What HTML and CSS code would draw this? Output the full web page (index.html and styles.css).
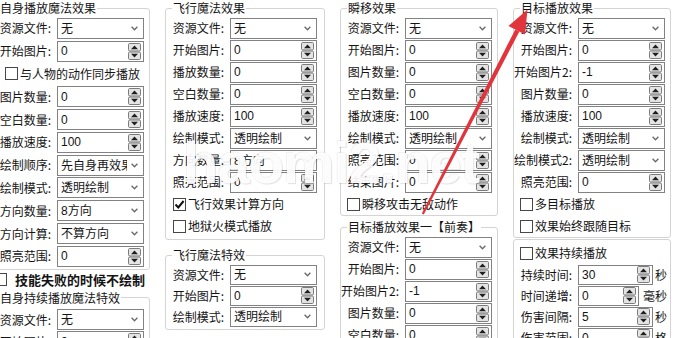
FILE: index.html
```html
<!DOCTYPE html>
<html lang="zh-CN">
<head>
<meta charset="utf-8">
<title>魔法效果设置</title>
<link rel="stylesheet" href="styles.css">
</head>
<body>
<svg class="defs" aria-hidden="true">
  <defs>
    <symbol id="spin" viewBox="0 0 13 17">
      <rect x="0.5" y="0.5" width="12" height="7.5" rx="1.2" fill="#e4e4e4" stroke="#7c7c7c"/>
      <rect x="0.5" y="9" width="12" height="7.5" rx="1.2" fill="#e4e4e4" stroke="#7c7c7c"/>
      <path d="M3 6.2 6.5 2.6 10 6.2Z" fill="#1e1e1e"/>
      <path d="M3 10.8 10 10.8 6.5 14.4Z" fill="#1e1e1e"/>
    </symbol>
    <symbol id="chev" viewBox="0 0 7 5">
      <path d="M0.6 0.8 3.5 3.8 6.4 0.8" fill="none" stroke="#6a6a6a" stroke-width="1.3"/>
    </symbol>
    <symbol id="tick" viewBox="0 0 11 11">
      <path d="M1.5 5.5 4.3 8.4 9.6 2" fill="none" stroke="#111" stroke-width="2"/>
    </symbol>
  </defs>
</svg>

<div class="dialog">
  <!-- column 1 -->
  <div class="col">
    <fieldset class="grp tall pb1">
      <legend>自身播放魔法效果</legend>
      <div class="row"><span class="lbl"><span>资源文件:</span></span><div class="ctl sel"><span class="v">无</span><svg class="chev"><use href="#chev"/></svg></div></div>
      <div class="row"><span class="lbl"><span>开始图片:</span></span><div class="ctl spin"><span class="v">0</span><svg class="sb"><use href="#spin"/></svg></div></div>
      <div class="chk ind6"><span class="box"></span><span>与人物的动作同步播放</span></div>
      <div class="row"><span class="lbl"><span>图片数量:</span></span><div class="ctl spin"><span class="v">0</span><svg class="sb"><use href="#spin"/></svg></div></div>
      <div class="row"><span class="lbl"><span>空白数量:</span></span><div class="ctl spin"><span class="v">0</span><svg class="sb"><use href="#spin"/></svg></div></div>
      <div class="row"><span class="lbl"><span>播放速度:</span></span><div class="ctl spin"><span class="v">100</span><svg class="sb"><use href="#spin"/></svg></div></div>
      <div class="row"><span class="lbl"><span>绘制顺序:</span></span><div class="ctl sel"><span class="v">先自身再效果</span><svg class="chev"><use href="#chev"/></svg></div></div>
      <div class="row"><span class="lbl"><span>绘制模式:</span></span><div class="ctl sel"><span class="v">透明绘制</span><svg class="chev"><use href="#chev"/></svg></div></div>
      <div class="row"><span class="lbl"><span>方向数量:</span></span><div class="ctl sel"><span class="v">8方向</span><svg class="chev"><use href="#chev"/></svg></div></div>
      <div class="row"><span class="lbl"><span>方向计算:</span></span><div class="ctl sel"><span class="v">不算方向</span><svg class="chev"><use href="#chev"/></svg></div></div>
      <div class="row"><span class="lbl"><span>照亮范围:</span></span><div class="ctl spin"><span class="v">0</span><svg class="sb"><use href="#spin"/></svg></div></div>
    </fieldset>
    <div class="chk strong"><span class="box"></span><span>技能失败的时候不绘制</span></div>
    <fieldset class="grp pt3">
      <legend>自身持续播放魔法特效</legend>
      <div class="row"><span class="lbl"><span>资源文件:</span></span><div class="ctl sel"><span class="v">无</span><svg class="chev"><use href="#chev"/></svg></div></div>
      <div class="row"><span class="lbl"><span>开始图片:</span></span><div class="ctl spin"><span class="v">0</span><svg class="sb"><use href="#spin"/></svg></div></div>
    </fieldset>
  </div>

  <!-- column 2 -->
  <div class="col">
    <fieldset class="grp">
      <legend>飞行魔法效果</legend>
      <div class="row"><span class="lbl"><span>资源文件:</span></span><div class="ctl sel"><span class="v">无</span><svg class="chev"><use href="#chev"/></svg></div></div>
      <div class="row"><span class="lbl"><span>开始图片:</span></span><div class="ctl spin"><span class="v">0</span><svg class="sb"><use href="#spin"/></svg></div></div>
      <div class="row"><span class="lbl"><span>播放数量:</span></span><div class="ctl spin"><span class="v">0</span><svg class="sb"><use href="#spin"/></svg></div></div>
      <div class="row"><span class="lbl"><span>空白数量:</span></span><div class="ctl spin"><span class="v">0</span><svg class="sb"><use href="#spin"/></svg></div></div>
      <div class="row"><span class="lbl"><span>播放速度:</span></span><div class="ctl spin"><span class="v">100</span><svg class="sb"><use href="#spin"/></svg></div></div>
      <div class="row"><span class="lbl"><span>绘制模式:</span></span><div class="ctl sel"><span class="v">透明绘制</span><svg class="chev"><use href="#chev"/></svg></div></div>
      <div class="row"><span class="lbl"><span>方向数量:</span></span><div class="ctl sel"><span class="v">8方向</span><svg class="chev"><use href="#chev"/></svg></div></div>
      <div class="row"><span class="lbl"><span>照亮范围:</span></span><div class="ctl spin"><span class="v">0</span><svg class="sb"><use href="#spin"/></svg></div></div>
      <div class="chk ind1"><span class="box"><svg class="tick"><use href="#tick"/></svg></span><span>飞行效果计算方向</span></div>
      <div class="chk ind1"><span class="box"></span><span>地狱火模式播放</span></div>
    </fieldset>
    <fieldset class="grp mt7 r21">
      <legend>飞行魔法特效</legend>
      <div class="row"><span class="lbl"><span>资源文件:</span></span><div class="ctl sel"><span class="v">无</span><svg class="chev"><use href="#chev"/></svg></div></div>
      <div class="row"><span class="lbl"><span>开始图片:</span></span><div class="ctl spin"><span class="v">0</span><svg class="sb"><use href="#spin"/></svg></div></div>
      <div class="row"><span class="lbl"><span>绘制模式:</span></span><div class="ctl sel"><span class="v">透明绘制</span><svg class="chev"><use href="#chev"/></svg></div></div>
    </fieldset>
  </div>

  <!-- column 3 -->
  <div class="col">
    <fieldset class="grp pb0">
      <legend>瞬移效果</legend>
      <div class="row"><span class="lbl"><span>资源文件:</span></span><div class="ctl sel"><span class="v">无</span><svg class="chev"><use href="#chev"/></svg></div></div>
      <div class="row"><span class="lbl"><span>开始图片:</span></span><div class="ctl spin"><span class="v">0</span><svg class="sb"><use href="#spin"/></svg></div></div>
      <div class="row"><span class="lbl"><span>图片数量:</span></span><div class="ctl spin"><span class="v">0</span><svg class="sb"><use href="#spin"/></svg></div></div>
      <div class="row"><span class="lbl"><span>空白数量:</span></span><div class="ctl spin"><span class="v">0</span><svg class="sb"><use href="#spin"/></svg></div></div>
      <div class="row"><span class="lbl"><span>播放速度:</span></span><div class="ctl spin"><span class="v">100</span><svg class="sb"><use href="#spin"/></svg></div></div>
      <div class="row"><span class="lbl"><span>绘制模式:</span></span><div class="ctl sel"><span class="v">透明绘制</span><svg class="chev"><use href="#chev"/></svg></div></div>
      <div class="row"><span class="lbl"><span>照亮范围:</span></span><div class="ctl spin"><span class="v">0</span><svg class="sb"><use href="#spin"/></svg></div></div>
      <div class="row"><span class="lbl"><span>结束图片:</span></span><div class="ctl spin"><span class="v">0</span><svg class="sb"><use href="#spin"/></svg></div></div>
      <div class="chk"><span class="box"></span><span>瞬移攻击无敌动作</span></div>
    </fieldset>
    <fieldset class="grp mt3">
      <legend>目标播放效果一【前奏】</legend>
      <div class="row"><span class="lbl"><span>资源文件:</span></span><div class="ctl sel"><span class="v">无</span><svg class="chev"><use href="#chev"/></svg></div></div>
      <div class="row"><span class="lbl"><span>开始图片:</span></span><div class="ctl spin"><span class="v">0</span><svg class="sb"><use href="#spin"/></svg></div></div>
      <div class="row"><span class="lbl"><span>开始图片2:</span></span><div class="ctl spin"><span class="v">-1</span><svg class="sb"><use href="#spin"/></svg></div></div>
      <div class="row"><span class="lbl"><span>图片数量:</span></span><div class="ctl spin"><span class="v">0</span><svg class="sb"><use href="#spin"/></svg></div></div>
      <div class="row"><span class="lbl"><span>空白数量:</span></span><div class="ctl spin"><span class="v">0</span><svg class="sb"><use href="#spin"/></svg></div></div>
    </fieldset>
  </div>

  <!-- column 4 -->
  <div class="col">
    <fieldset class="grp pb0">
      <legend>目标播放效果</legend>
      <div class="row"><span class="lbl"><span>资源文件:</span></span><div class="ctl sel"><span class="v">无</span><svg class="chev"><use href="#chev"/></svg></div></div>
      <div class="row"><span class="lbl"><span>开始图片:</span></span><div class="ctl spin"><span class="v">0</span><svg class="sb"><use href="#spin"/></svg></div></div>
      <div class="row"><span class="lbl"><span>开始图片2:</span></span><div class="ctl spin"><span class="v">-1</span><svg class="sb"><use href="#spin"/></svg></div></div>
      <div class="row"><span class="lbl"><span>图片数量:</span></span><div class="ctl spin"><span class="v">0</span><svg class="sb"><use href="#spin"/></svg></div></div>
      <div class="row"><span class="lbl"><span>播放速度:</span></span><div class="ctl spin"><span class="v">100</span><svg class="sb"><use href="#spin"/></svg></div></div>
      <div class="row"><span class="lbl"><span>绘制模式:</span></span><div class="ctl sel"><span class="v">透明绘制</span><svg class="chev"><use href="#chev"/></svg></div></div>
      <div class="row"><span class="lbl"><span>绘制模式2:</span></span><div class="ctl sel"><span class="v">透明绘制</span><svg class="chev"><use href="#chev"/></svg></div></div>
      <div class="row"><span class="lbl"><span>照亮范围:</span></span><div class="ctl spin"><span class="v">0</span><svg class="sb"><use href="#spin"/></svg></div></div>
      <div class="chk"><span class="box"></span><span>多目标播放</span></div>
      <div class="chk"><span class="box"></span><span>效果始终跟随目标</span></div>
    </fieldset>
    <fieldset class="grp nolegend r21">
      <div class="chk"><span class="box"></span><span>效果持续播放</span></div>
      <div class="row"><span class="lbl"><span>持续时间:</span></span><div class="ctl spin w75"><span class="v">30</span><svg class="sb"><use href="#spin"/></svg></div><span class="unit">秒</span></div>
      <div class="row"><span class="lbl"><span>时间递增:</span></span><div class="ctl spin w61"><span class="v">0</span><svg class="sb"><use href="#spin"/></svg></div><span class="unit gap4">毫秒</span></div>
      <div class="row"><span class="lbl"><span>伤害间隔:</span></span><div class="ctl spin w75"><span class="v">5</span><svg class="sb"><use href="#spin"/></svg></div><span class="unit">秒</span></div>
      <div class="row"><span class="lbl"><span>伤害范围:</span></span><div class="ctl spin w75"><span class="v">0</span><svg class="sb"><use href="#spin"/></svg></div><span class="unit">格</span></div>
    </fieldset>
  </div>
</div>

<div class="watermark">haomi2.net</div>

<svg class="arrow" viewBox="0 0 685 338" aria-hidden="true">
  <path d="M421.8 213.4 423.8 214.4 519.4 31.5 515.3 29.4Z" fill="#e2343c"/>
  <path d="M527.5 9.5 525 34.5 508.5 26Z" fill="#e2343c"/>
</svg>
</body>
</html>
```

FILE: styles.css
```css
html, body {
  margin: 0;
  padding: 0;
  background: #ffffff;
}

body {
  width: 685px;
  height: 338px;
  overflow: hidden;
  position: relative;
  font-family: "Noto Sans CJK SC", "Noto Sans", sans-serif;
  font-size: 12px;
  line-height: 16px;
  color: #141414;
}

.defs {
  position: absolute;
  width: 0;
  height: 0;
  overflow: hidden;
}

.dialog {
  display: grid;
  grid-template-columns: 158px 160px 158px 158px;
  column-gap: 15px;
  margin-left: -8px;
  align-items: start;
}

.col {
  display: flex;
  flex-direction: column;
}

.grp {
  margin: 0;
  min-inline-size: 0;
  border: 1px solid #d4d4d4;
  border-radius: 3px;
  padding: 1px 6px 2px;
}

.grp legend {
  padding: 0 1px;
  font-size: 12px;
  line-height: 16px;
  white-space: nowrap;
}

.pb0 { padding-bottom: 0; }
.pb1 { padding-bottom: 1px; }
.pt3 { padding-top: 3px; }
.mt7 { margin-top: 7px; }
.mt3 { margin-top: 3px; }

.nolegend {
  margin-top: 1px;
  padding-top: 2px;
}

.row {
  display: flex;
  align-items: center;
  height: 22px;
}

.tall .row,
.tall .chk {
  height: 22.8px;
}

.r21 .row {
  height: 21px;
}

.lbl {
  flex: none;
  width: 58px;
  box-sizing: border-box;
  padding-right: 6px;
  display: flex;
  justify-content: flex-end;
  white-space: nowrap;
}

.ctl {
  flex: none;
  width: 87px;
  height: 21px;
  box-sizing: border-box;
  border: 1px solid #828282;
  background: #ffffff;
  display: flex;
  align-items: center;
  padding-left: 3px;
}

.r21 .ctl {
  height: 20px;
}

.ctl .v {
  flex: 1;
  min-width: 0;
  overflow: hidden;
  white-space: nowrap;
  font-family: "Liberation Sans", "Noto Sans CJK SC", sans-serif;
  font-size: 12px;
}

.sel .v {
  font-family: "Noto Sans CJK SC", sans-serif;
}

.sel .v:first-letter {
  font-family: "Liberation Sans", "Noto Sans CJK SC", sans-serif;
}

.chev {
  flex: none;
  width: 7px;
  height: 5px;
  margin: 0 5px 0 4px;
}

.sb {
  flex: none;
  width: 13px;
  height: 17px;
  margin-right: 2px;
}

.w75 { width: 75px; }
.w61 { width: 61px; }

.unit {
  margin-left: 2px;
  white-space: nowrap;
}

.gap4 { margin-left: 4px; }

.chk {
  display: flex;
  align-items: center;
  gap: 2px;
  height: 22px;
  white-space: nowrap;
}

.box {
  flex: none;
  width: 13px;
  height: 13px;
  box-sizing: border-box;
  border: 1px solid #474747;
  background: #ffffff;
  display: flex;
  align-items: center;
  justify-content: center;
}

.tick {
  width: 11px;
  height: 11px;
}

.ind6 { margin-left: 6px; }
.ind1 { margin-left: 1px; }

.strong {
  height: 20px;
  margin-left: 2px;
  gap: 8px;
  font-size: 13px;
  font-weight: bold;
}

.watermark {
  position: absolute;
  left: 183px;
  top: 128px;
  font-family: "Liberation Sans", sans-serif;
  font-weight: bold;
  font-size: 58px;
  line-height: 70px;
  letter-spacing: -1px;
  color: rgba(255, 255, 255, 0.93);
  text-shadow: 1px 1px 1px rgba(0, 0, 0, 0.12), -1px -1px 1px rgba(0, 0, 0, 0.06);
  white-space: nowrap;
  pointer-events: none;
}

.arrow {
  position: absolute;
  left: 0;
  top: 0;
  width: 685px;
  height: 338px;
  pointer-events: none;
}
```
